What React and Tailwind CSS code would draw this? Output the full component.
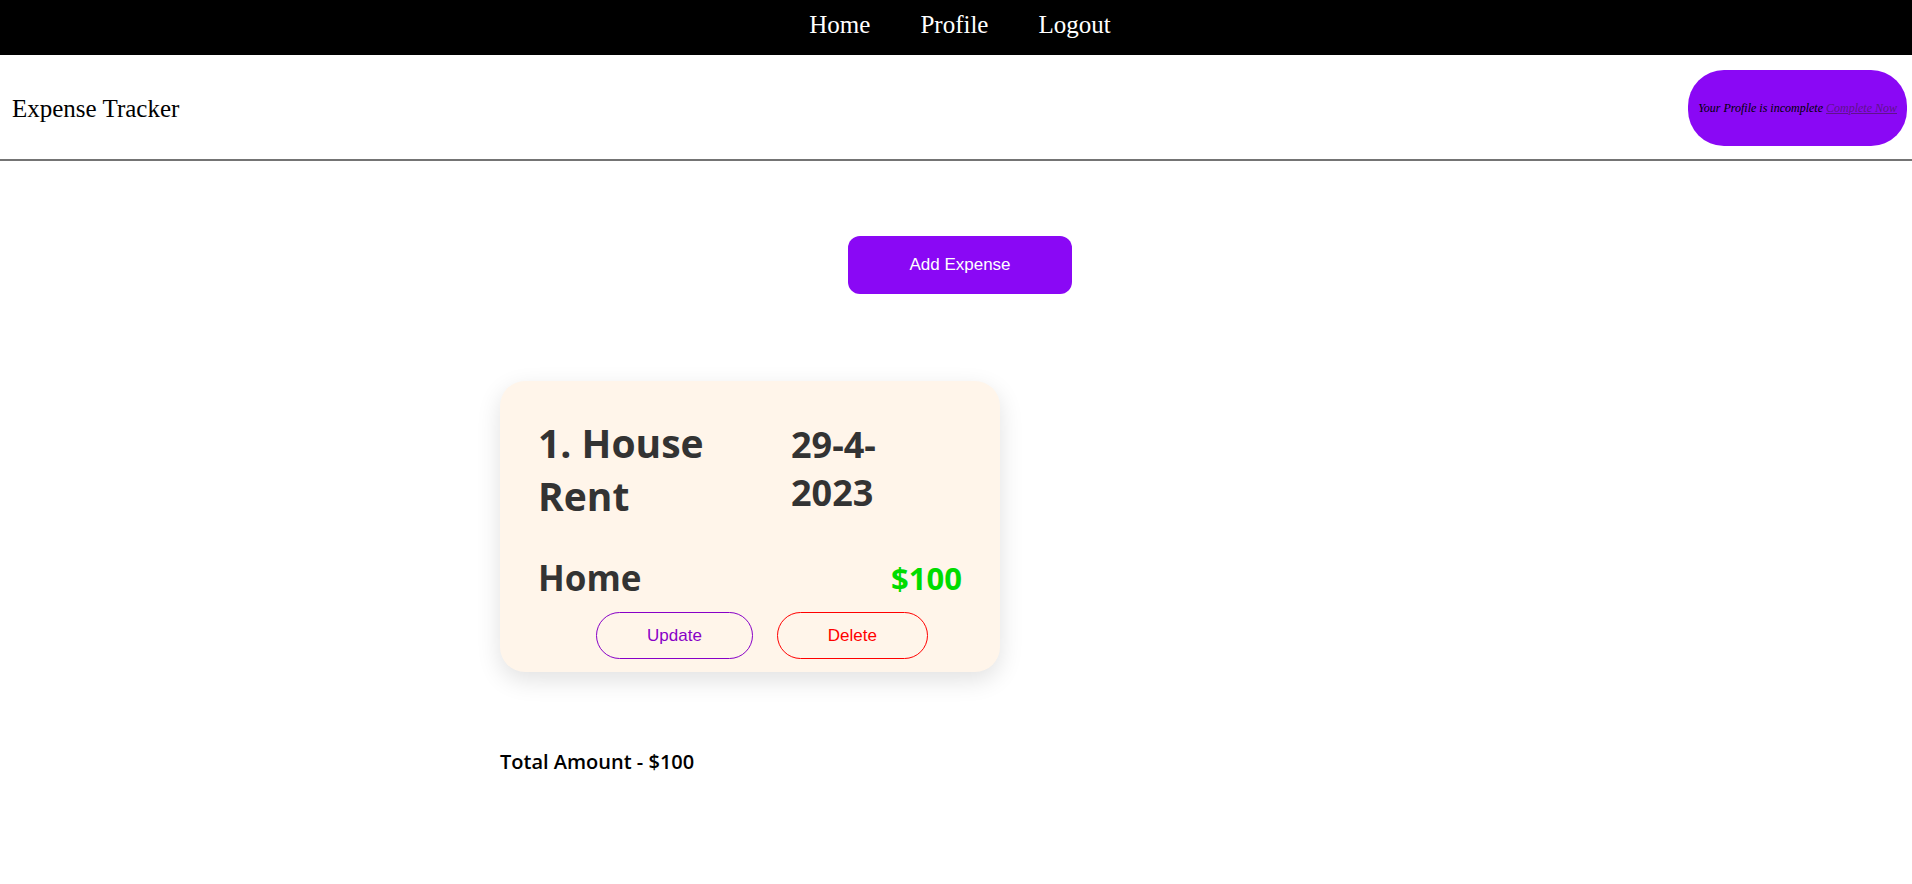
const navLinks = ["Home", "Profile", "Logout"];

const expenses = [
  { id: 1, title: "House Rent", date: "29-4-2023", category: "Home", amount: 100 },
];

function ExpenseCard({ expense, index }) {
  return (
    <li className="flex w-[500px] flex-col rounded-[25px] bg-[#fff5ea] px-[38px] pt-[35px] pb-[13px] text-[#333] shadow-[0_8px_24px_rgba(0,0,0,0.12)]">
      <div className="flex items-center justify-between">
        <h2 className="w-[200px] text-[39px] leading-[53px] font-bold">{`${index + 1}. ${expense.title}`}</h2>
        <h3 className="w-[171px] pr-8 text-[36px] leading-[48px] font-bold">{expense.date}</h3>
      </div>
      <div className="mt-8 flex items-center justify-between">
        <h3 className="text-[35px] leading-[48px] font-bold">{expense.category}</h3>
        <span className="text-[31px] leading-[48px] font-bold text-[#00dc00]">{`$${expense.amount}`}</span>
      </div>
      <div className="mt-[10px] ml-6 flex justify-center gap-6 font-['Liberation_Sans',sans-serif] text-[17px] leading-[19px]">
        <button type="button" className="rounded-full border border-[#8800c7] px-[50px] py-[13px] text-[#8800c7]">
          Update
        </button>
        <button type="button" className="rounded-full border border-[#ff0000] px-[50px] py-[13px] text-[#ff0000]">
          Delete
        </button>
      </div>
    </li>
  );
}

export default function App() {
  const total = expenses.reduce((sum, e) => sum + e.amount, 0);
  return (
    <div className="min-h-screen bg-white font-['Liberation_Serif',serif] text-black">
      <nav className="bg-black pt-[10px] pb-4 pl-2">
        <ul className="flex justify-center gap-[50px] text-[25px] leading-[29px] text-white">
          {navLinks.map((label) => (
            <li key={label}>
              <a href={"#" + label.toLowerCase()}>{label}</a>
            </li>
          ))}
        </ul>
      </nav>

      <header className="flex items-center justify-between border-b-2 border-[#747474] pt-[15px] pr-[5px] pb-[13px] pl-3">
        <h1 className="text-[25px] leading-[29px]">Expense Tracker</h1>
        <p className="rounded-[36px] bg-[#8a08f5] px-[10px] py-[30px] text-[12px] leading-4 italic">
          Your Profile is incomplete{" "}
          <a href="#complete" className="text-[#5f128b] underline">
            Complete Now
          </a>
        </p>
      </header>

      <main>
        <div className="flex justify-center pt-[75px] pl-2">
          <button
            type="button"
            className="rounded-xl bg-[#8a08f5] px-[61px] py-[19px] font-['Liberation_Sans',sans-serif] text-[17px] leading-5 text-white"
          >
            Add Expense
          </button>
        </div>
        <section className="mt-[87px] ml-[500px] font-['Open_Sans','Noto_Sans',sans-serif]">
          <ul>
            {expenses.map((expense, index) => (
              <ExpenseCard key={expense.id} expense={expense} index={index} />
            ))}
          </ul>
          <p className="mt-[76px] text-[20px] leading-7 font-semibold">{`Total Amount - $${total}`}</p>
        </section>
      </main>
    </div>
  );
}
